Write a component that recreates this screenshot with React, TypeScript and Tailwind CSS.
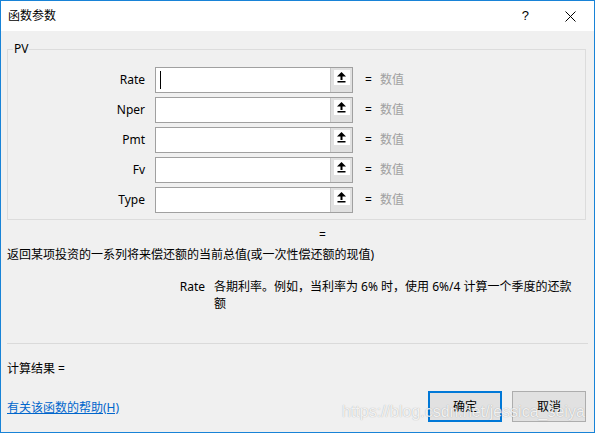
import React from "react";

const font = { fontFamily: '"Noto Sans", "Noto Sans CJK SC", sans-serif' };

function UpIcon() {
  return (
    <svg width="9" height="11" viewBox="0 0 9 11" className="block">
      <polygon points="4.5,0 0,4.5 9,4.5" fill="#000" />
      <rect x="3.5" y="4" width="2" height="4" fill="#000" />
      <rect x="0.5" y="9" width="8" height="1.5" fill="#000" />
    </svg>
  );
}

function Row({ label, cursor }: { label: string; cursor?: boolean }) {
  return (
    <div className="flex items-center h-[26px]">
      <div className="w-[138px] text-right text-[12px] text-black pr-[1px]">{label}</div>
      <div className="ml-[9px] w-[198px] h-[26px] border border-[#a0a0a0] bg-white flex">
        <div className="flex-1 flex items-center pl-[4px]">
          {cursor && <div className="w-[1px] h-[18px] bg-black" />}
        </div>
        <div className="w-[22px] h-full bg-[#e1e1e1] border-l border-[#c8c8c8] flex justify-center pt-[2px]">
          <div className="w-[16px] h-[15px] bg-white flex items-center justify-center">
            <UpIcon />
          </div>
        </div>
      </div>
      <div className="ml-[12px] text-[12px] text-black">=</div>
      <div className="ml-[8px] text-[12px] text-[#a0a0a0]">数值</div>
    </div>
  );
}

export default function App() {
  return (
    <div
      className="relative w-[595px] h-[433px] border border-[#1883d7] bg-[#f0f0f0] flex flex-col overflow-hidden"
      style={font}
    >
      <div className="h-[30px] bg-white flex items-center pl-[7px] shrink-0">
        <div className="text-[12px] text-black">函数参数</div>
        <div className="flex-1" />
        <div className="text-[13px] text-black mr-[36px]" style={{ fontFamily: '"Liberation Sans", sans-serif' }}>?</div>
        <svg width="11" height="11" viewBox="0 0 11 11" className="mr-[18px]">
          <path d="M0.5 0.5 L10.5 10.5 M10.5 0.5 L0.5 10.5" stroke="#000" strokeWidth="1" />
        </svg>
      </div>

      <div className="flex-1 flex flex-col pl-[6px] pr-[8px]">
        <fieldset className="mt-[10px] border border-[#dcdcdc] pb-[6px]">
          <legend className="ml-[5px] px-[1px] text-[12px] leading-[16px] text-black">PV</legend>
          <div className="pt-[10px] flex flex-col gap-[4px]">
            <Row label="Rate" cursor />
            <Row label="Nper" />
            <Row label="Pmt" />
            <Row label="Fv" />
            <Row label="Type" />
          </div>
        </fieldset>

        <div className="mt-[7px] h-[16px] leading-[16px] text-[12px] text-black pl-[312px]">=</div>
        <div className="mt-[4px] h-[16px] leading-[16px] text-[12px] text-black whitespace-nowrap">
          返回某项投资的一系列将来偿还额的当前总值(或一次性偿还额的现值)
        </div>

        <div className="mt-[15px] flex text-[12px] leading-[17px] text-black">
          <div className="w-[198px] text-right">Rate</div>
          <div className="ml-[9px] whitespace-nowrap">
            各期利率。例如，当利率为 6% 时，使用 6%/4 计算一个季度的还款
            <br />额
          </div>
        </div>

        <div className="flex-1" />
        <div className="h-[1px] bg-[#dadada] mr-[-2px]" />
        <div className="mt-[17px] text-[12px] leading-[16px] text-black">计算结果 =</div>

        <div className="mt-[14px] flex items-center">
          <a className="text-[12px] text-[#0066cc] underline mt-[2px]">有关该函数的帮助(H)</a>
          <div className="flex-1" />
          <button className="w-[74px] h-[31px] border-2 border-[#0078d7] bg-[#e1e1e1] text-[12px] text-black">确定</button>
          <button className="ml-[10px] w-[74px] h-[31px] border border-[#adadad] bg-[#e1e1e1] text-[12px] text-black">取消</button>
        </div>
        <div className="h-[10px]" />
      </div>

      <div
        className="absolute left-[341px] top-[399px] text-[16px] text-white/85 whitespace-nowrap pointer-events-none"
        style={{ fontFamily: '"Liberation Sans", sans-serif', textShadow: "0 0 1px rgba(0,0,0,0.35)" }}
      >
        https://blog.csdn.net/jessica_seiya
      </div>
    </div>
  );
}
